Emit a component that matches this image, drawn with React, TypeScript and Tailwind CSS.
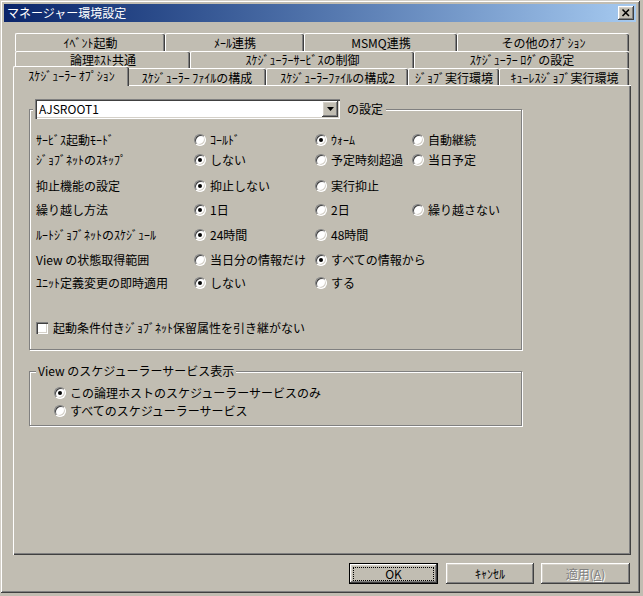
import React from "react";

const raised =
  "shadow-[inset_-1px_-1px_0_#404040,inset_1px_1px_0_#ffffff,inset_-2px_-2px_0_#808080,inset_2px_2px_0_#d4d0c8]";

function Radio({ checked }: { checked?: boolean }) {
  return (
    <span className="flex items-center justify-center w-[12px] h-[12px] shrink-0 rounded-full bg-white border border-t-[#808080] border-l-[#808080] border-r-white border-b-white shadow-[inset_1px_1px_0_#404040,inset_-1px_-1px_0_#d4d0c8]">
      {checked && <span className="w-[4px] h-[4px] rounded-full bg-black" />}
    </span>
  );
}

function RadioOpt({ checked, label }: { checked?: boolean; label: string }) {
  return (
    <div className="flex items-center gap-[4px] whitespace-nowrap">
      <Radio checked={checked} />
      <span>{label}</span>
    </div>
  );
}

function Tab({ label, className }: { label: string; className: string }) {
  return (
    <div
      className={
        "flex items-center justify-center h-full whitespace-nowrap border-t border-l border-white rounded-tl-[2px] rounded-tr-[2px] shadow-[inset_-1px_0_0_#404040,inset_-2px_0_0_#808080] " +
        className
      }
    >
      {label}
    </div>
  );
}

type Row = {
  label: string;
  opts: { label: string; checked?: boolean }[];
  mt: string;
};

const rows: Row[] = [
  { label: "ｻｰﾋﾞｽ起動ﾓｰﾄﾞ", mt: "mt-0", opts: [{ label: "ｺｰﾙﾄﾞ" }, { label: "ｳｫｰﾑ", checked: true }, { label: "自動継続" }] },
  { label: "ｼﾞｮﾌﾞﾈｯﾄのｽｷｯﾌﾟ", mt: "mt-0", opts: [{ label: "しない", checked: true }, { label: "予定時刻超過" }, { label: "当日予定" }] },
  { label: "抑止機能の設定", mt: "mt-[6px]", opts: [{ label: "抑止しない", checked: true }, { label: "実行抑止" }] },
  { label: "繰り越し方法", mt: "mt-[4px]", opts: [{ label: "1日", checked: true }, { label: "2日" }, { label: "繰り越さない" }] },
  { label: "ﾙｰﾄｼﾞｮﾌﾞﾈｯﾄのｽｹｼﾞｭｰﾙ", mt: "mt-[5px]", opts: [{ label: "24時間", checked: true }, { label: "48時間" }] },
  { label: "View の状態取得範囲", mt: "mt-[5px]", opts: [{ label: "当日分の情報だけ" }, { label: "すべての情報から", checked: true }] },
  { label: "ﾕﾆｯﾄ定義変更の即時適用", mt: "mt-[3px]", opts: [{ label: "しない", checked: true }, { label: "する" }] },
];

export default function App() {
  return (
    <div className="w-[643px] h-[596px] bg-[#c1bdb2] text-black text-[12px] leading-[14px] font-['Noto_Sans_CJK_JP','Noto_Sans',sans-serif]">
      <div className="w-[640px] h-[593px] p-[4px] flex flex-col shadow-[inset_1px_1px_0_#d4d0c8,inset_-1px_-1px_0_#404040,inset_2px_2px_0_#ffffff,inset_-2px_-2px_0_#808080]">
        {/* title bar */}
        <div className="h-[18px] flex items-center justify-between bg-linear-to-r from-[#0a246a] to-[#a6caf0] pl-[3px] pr-[2px]">
          <span className="text-white">マネージャー環境設定</span>
          <div className={"w-[16px] h-[14px] bg-[#c1bdb2] flex items-center justify-center " + raised}>
            <svg width="16" height="14" viewBox="0 0 16 14">
              <path d="M4.5 3.5 L11 10 M11 3.5 L4.5 10" stroke="#000" strokeWidth="1.6" fill="none" />
            </svg>
          </div>
        </div>

        <div className="flex flex-col pl-[9px] pr-[5px] mt-[11px]">
          {/* tabs */}
          <div className="flex flex-col px-[2px]">
            <div className="flex h-[18px]">
              <Tab label="ｲﾍﾞﾝﾄ起動" className="w-[150px]" />
              <Tab label="ﾒｰﾙ連携" className="w-[139px]" />
              <Tab label="MSMQ連携" className="w-[153px]" />
              <Tab label="その他のｵﾌﾟｼｮﾝ" className="w-[172px]" />
            </div>
            <div className="flex h-[17px]">
              <Tab label="論理ﾎｽﾄ共通" className="w-[175px]" />
              <Tab label="ｽｹｼﾞｭｰﾗｰｻｰﾋﾞｽの制御" className="w-[224px]" />
              <Tab label="ｽｹｼﾞｭｰﾗｰ ﾛｸﾞの設定" className="w-[215px]" />
            </div>
            <div className="flex items-end h-[17px]">
              <Tab
                label="ｽｹｼﾞｭｰﾗｰ ｵﾌﾟｼｮﾝ"
                className="relative z-10 w-[116px] -mx-[2px] !h-[20px] -mb-[1px] bg-[#c1bdb2] pb-[2px]"
              />
              <Tab label="ｽｹｼﾞｭｰﾗｰ ﾌｧｲﾙの構成" className="w-[139px] pt-[1px]" />
              <Tab label="ｽｹｼﾞｭｰﾗｰﾌｧｲﾙの構成2" className="w-[142px] pt-[1px]" />
              <Tab label="ｼﾞｮﾌﾞ実行環境" className="w-[91px] pt-[1px]" />
              <Tab label="ｷｭｰﾚｽｼﾞｮﾌﾞ実行環境" className="w-[130px] pt-[1px]" />
            </div>
          </div>

          {/* panel */}
          <div className="h-[470px] border-t border-l border-white pt-[23px] pl-[15px] flex flex-col shadow-[inset_-1px_-1px_0_#404040,inset_-2px_-2px_0_#808080]">
            <div className="relative w-[493px] h-[241px] border border-[#808080] shadow-[inset_1px_1px_0_#ffffff,1px_1px_0_#ffffff] pt-[20px] pl-[6px]">
              <div className="absolute left-[3px] -top-[11px] flex items-center bg-[#c1bdb2] pl-[2px] pr-[3px] gap-[7px]">
                <div className="w-[305px] h-[20px] bg-white flex items-center justify-between pl-[4px] pr-[2px] shadow-[inset_1px_1px_0_#808080,inset_2px_2px_0_#404040,inset_-1px_-1px_0_#ffffff,inset_-2px_-2px_0_#d4d0c8]">
                  <span>AJSROOT1</span>
                  <div className={"w-[16px] h-[16px] bg-[#c1bdb2] flex items-center justify-center " + raised}>
                    <svg width="7" height="4" viewBox="0 0 7 4">
                      <path d="M0 0 H7 L3.5 4 Z" fill="#000" />
                    </svg>
                  </div>
                </div>
                <span>の設定</span>
              </div>

              {rows.map((r, i) => (
                <div key={i} className={"flex items-center h-[20px] " + r.mt}>
                  <div className="w-[158px] whitespace-nowrap">{r.label}</div>
                  <div className="w-[121px]">{r.opts[0] && <RadioOpt {...r.opts[0]} />}</div>
                  <div className="w-[97px]">{r.opts[1] && <RadioOpt {...r.opts[1]} />}</div>
                  <div>{r.opts[2] && <RadioOpt {...r.opts[2]} />}</div>
                </div>
              ))}

              <div className="flex items-center h-[20px] mt-[25px] gap-[5px]">
                <span className="w-[12px] h-[12px] bg-white shadow-[inset_1px_1px_0_#808080,inset_2px_2px_0_#404040,inset_-1px_-1px_0_#ffffff,inset_-2px_-2px_0_#d4d0c8]" />
                <span>起動条件付きｼﾞｮﾌﾞﾈｯﾄ保留属性を引き継がない</span>
              </div>
            </div>

            <div className="relative mt-[21px] w-[493px] h-[55px] border border-[#808080] shadow-[inset_1px_1px_0_#ffffff,1px_1px_0_#ffffff] pt-[12px] pl-[24px]">
              <div className="absolute left-[6px] -top-[9px] bg-[#c1bdb2] px-[2px] leading-[16px]">
                View のスケジューラーサービス表示
              </div>
              <div className="flex items-center h-[18px]">
                <RadioOpt checked label="この論理ホストのスケジューラーサービスのみ" />
              </div>
              <div className="flex items-center h-[18px]">
                <RadioOpt label="すべてのスケジューラーサービス" />
              </div>
            </div>
          </div>

          {/* buttons */}
          <div className="flex justify-end mt-[8px] pr-[1px] h-[21px]">
            <div className="w-[89px] h-[21px] border border-black">
              <div className={"w-full h-full p-[3px] pb-[2px] " + raised}>
                <div className="w-full h-full border border-dotted border-black flex items-center justify-center">
                  OK
                </div>
              </div>
            </div>
            <div className={"ml-[8px] w-[88px] h-[21px] flex items-center justify-center " + raised}>ｷｬﾝｾﾙ</div>
            <div className={"ml-[7px] w-[89px] h-[21px] flex items-center justify-center text-[#808080] [text-shadow:1px_1px_0_#ffffff] " + raised}>
              適用(<span className="underline">A</span>)
            </div>
          </div>
        </div>
      </div>
    </div>
  );
}
